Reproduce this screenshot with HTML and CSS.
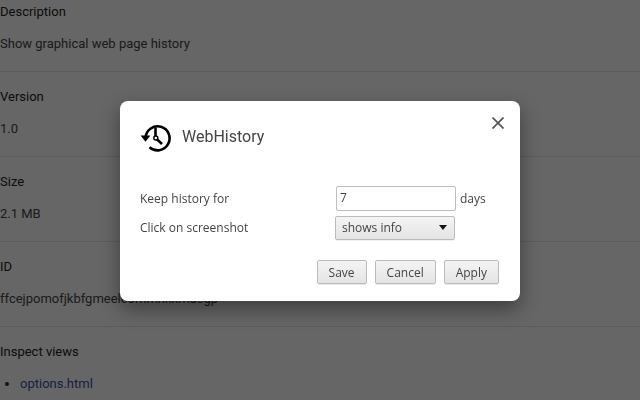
FILE: index.html
```html
<!DOCTYPE html>
<html lang="en">
<head>
<meta charset="utf-8">
<title>WebHistory</title>
<link rel="stylesheet" href="styles.css">
</head>
<body>
<main class="page">
  <section class="block">
    <h2 class="label">Description</h2>
    <p class="value">Show graphical web page history</p>
  </section>
  <section class="block">
    <h2 class="label">Version</h2>
    <p class="value">1.0</p>
  </section>
  <section class="block">
    <h2 class="label">Size</h2>
    <p class="value">2.1 MB</p>
  </section>
  <section class="block">
    <h2 class="label">ID</h2>
    <p class="value">ffcejpomofjkbfgmeelcommnkkmaegp</p>
  </section>
  <section class="block">
    <h2 class="label">Inspect views</h2>
    <ul class="views">
      <li><a class="link" href="#">options.html</a></li>
      <li><a class="link" href="#">history.html</a></li>
    </ul>
  </section>
</main>
<div class="overlay"></div>
<div class="dialog">
  <header class="head">
    <svg class="logo" viewBox="0 0 32 32" width="32" height="32" aria-hidden="true">
      <path class="logo-line" d="M5.6 16.5A12 12 0 1 1 9.5 26.2"/>
      <path class="logo-arrow" d="M0.6 14.6H10.4L5.5 20.8Z"/>
      <path class="logo-hand" d="M15.5 6.5V17L22 23"/>
      <circle class="logo-pin" cx="15.8" cy="17" r="2"/>
    </svg>
    <h1 class="title">WebHistory</h1>
    <svg class="close" viewBox="0 0 12 12" width="12" height="12" aria-hidden="true">
      <path d="M0.5 0.5L11.5 11.5M11.5 0.5L0.5 11.5"/>
    </svg>
  </header>
  <div class="form">
    <div class="row">
      <span class="field-label">Keep history for</span>
      <span class="input">7</span>
      <span class="unit">days</span>
    </div>
    <div class="row row-select">
      <span class="field-label">Click on screenshot</span>
      <span class="select">shows info<i class="caret"></i></span>
    </div>
  </div>
  <footer class="actions">
    <button class="btn">Save</button>
    <button class="btn">Cancel</button>
    <button class="btn">Apply</button>
  </footer>
</div>
</body>
</html>
```
FILE: styles.css
```css
* { box-sizing: border-box; }
html, body { margin: 0; height: 100%; overflow: hidden; background: #fff; }
body { font-family: Roboto, sans-serif; font-size: 13px; color: #333; }

.page { margin-top: -13px; }
.block { height: 85px; padding-top: 16px; border-bottom: 1px solid #e6e6e6; }
.label { margin: 0; font-size: 13px; line-height: 18px; font-weight: 400; color: #222; }
.value { margin: 14px 0 0; font-size: 13px; line-height: 18px; color: #444; }
.views { margin: 14px 0 0; padding: 0 0 0 20px; line-height: 18px; }
.views li { height: 24px; color: #333; }
.link { color: #3b50a6; text-decoration: none; }

.overlay { position: fixed; inset: 0; background: rgba(0, 0, 0, .6); }

.dialog {
  position: absolute; left: 120px; top: 101px; width: 400px; height: 200px;
  background: #fff; border-radius: 8px;
  box-shadow: 0 8px 20px rgba(0, 0, 0, .4);
  font-family: "Open Sans", sans-serif; font-size: 12px; color: #444;
}
.head { position: relative; display: flex; align-items: center; height: 70px; padding: 0 0 0 20px; }
.logo { display: block; margin-top: 2px; }
.logo-line, .logo-hand { fill: none; stroke: #000; stroke-width: 2.6; }
.logo-arrow { fill: #000; }
.logo-pin { fill: #fff; stroke: #000; stroke-width: 1.4; }
.title { margin: 0 0 0 10px; font-family: Roboto, sans-serif; font-size: 16px; font-weight: 400; color: #444; }
.close { position: absolute; right: 16px; top: 16px; }
.close path { fill: none; stroke: #555; stroke-width: 1.7; }

.form { padding: 15px 0 0 20px; }
.row { display: flex; align-items: center; height: 25px; }
.row-select { margin-top: 4px; }
.field-label { width: 195px; }
.input {
  width: 120px; height: 25px; margin-left: 1px; padding: 0 3px;
  border: 1px solid #bfbfbf; border-radius: 2px; line-height: 22px; color: #444;
}
.unit { margin-left: 4px; }
.select {
  position: relative; width: 120px; height: 24px; padding: 0 6px;
  border: 1px solid #bbb; border-radius: 2px; line-height: 22px; color: #444;
  background: linear-gradient(#f4f4f4, #e4e4e4);
  box-shadow: 0 1px 0 rgba(0, 0, 0, .05);
}
.caret {
  position: absolute; right: 7px; top: 8px; width: 0; height: 0;
  border-left: 4px solid transparent; border-right: 4px solid transparent; border-top: 5px solid #111;
}

.actions { display: flex; justify-content: flex-end; gap: 8px; margin-top: 20px; padding-right: 21px; }
.btn {
  height: 24px; padding: 0 11px;
  border: 1px solid #bbb; border-radius: 2px;
  background: linear-gradient(#f4f4f4, #e4e4e4);
  box-shadow: 0 1px 0 rgba(0, 0, 0, .08);
  font-family: "Open Sans", sans-serif; font-size: 12px; color: #444;
}
```
